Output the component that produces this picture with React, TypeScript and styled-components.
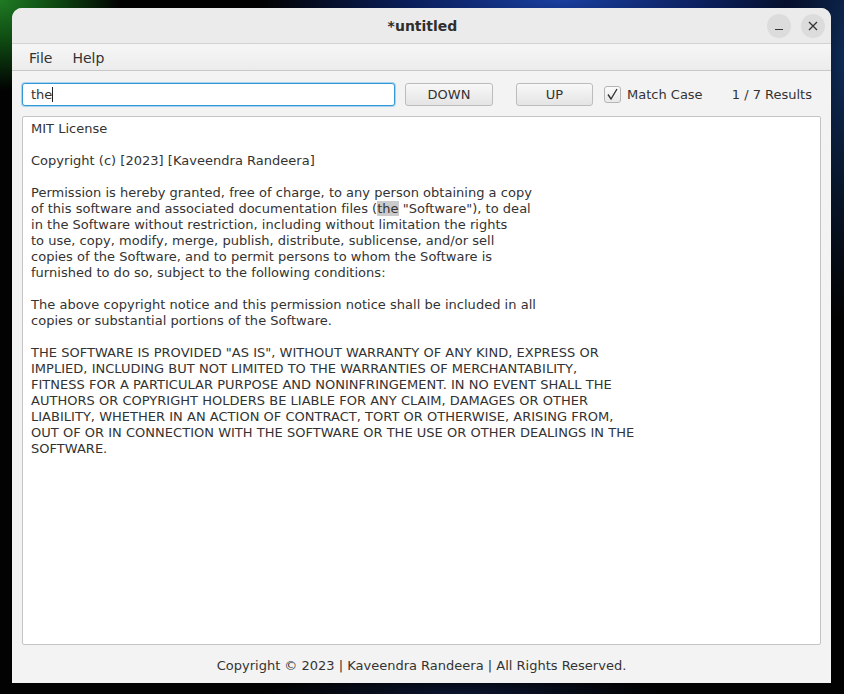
import styled, { createGlobalStyle } from 'styled-components';

const GlobalStyle = createGlobalStyle`
  html, body {
    margin: 0;
    padding: 0;
    width: 844px;
    height: 694px;
    overflow: hidden;
  }
  body {
    background:
      radial-gradient(ellipse 120px 90px at 0px 0px, #1f7a24 0%, #0e4a12 45%, rgba(0,0,0,0) 100%),
      radial-gradient(ellipse 300px 60px at 560px 0px, #1a3fa0 0%, #0a1e5a 50%, rgba(0,0,0,0) 100%),
      radial-gradient(ellipse 60px 260px at 844px 60px, #0e2a55 0%, rgba(0,0,0,0) 100%),
      radial-gradient(ellipse 200px 20px at 460px 694px, #0b1530 0%, rgba(0,0,0,0) 100%),
      #020202;
    font-family: 'DejaVu Sans', 'Liberation Sans', sans-serif;
  }
`;

const Desktop = styled.div`
  padding: 8px 0 0 12px;
`;

const Window = styled.div`
  width: 819px;
  height: 675px;
  display: flex;
  flex-direction: column;
  background: #f3f3f3;
  border-radius: 10px 10px 0 0;
  overflow: hidden;
`;

const TitleBar = styled.div`
  height: 36px;
  flex: none;
  display: flex;
  align-items: center;
  justify-content: center;
  position: relative;
  background: #ebebeb;
  border-bottom: 1px solid #d2d2d2;
  box-sizing: border-box;
`;

const Title = styled.div`
  font-size: 14px;
  font-weight: bold;
  color: #2e2e2e;
  margin-left: 2px;
`;

const WinControls = styled.div`
  position: absolute;
  right: 6px;
  top: 6px;
  display: flex;
  gap: 10px;
`;

const WinButton = styled.div`
  width: 24px;
  height: 24px;
  border-radius: 50%;
  background: #dcdcdc;
  display: flex;
  align-items: center;
  justify-content: center;
`;

const MenuBar = styled.div`
  height: 27px;
  flex: none;
  display: flex;
  align-items: center;
  padding: 2px 0 0 17px;
  gap: 20px;
  background: linear-gradient(#f6f6f6, #ececec);
  border-bottom: 1px solid #c8c8c8;
  box-sizing: border-box;
  font-size: 14px;
  color: #333;
`;

const Toolbar = styled.div`
  height: 45px;
  flex: none;
  display: flex;
  align-items: center;
  padding: 2px 10px 0 10px;
  box-sizing: border-box;
  font-size: 13px;
  color: #333;
`;

const SearchField = styled.div`
  width: 373px;
  height: 23px;
  box-sizing: border-box;
  border: 1px solid #3399d6;
  border-radius: 3px;
  box-shadow: 0 0 0 1px #a8d4ef;
  background: #fff;
  display: flex;
  align-items: center;
  padding-left: 8px;
  font-size: 13px;
`;

const Caret = styled.span`
  display: inline-block;
  width: 1px;
  height: 15px;
  background: #222;
`;

const Button = styled.div<{ $width: number; $gap: number }>`
  width: ${(p) => p.$width}px;
  height: 23px;
  margin-left: ${(p) => p.$gap}px;
  box-sizing: border-box;
  border: 1px solid #bcbcbc;
  border-radius: 3px;
  background: linear-gradient(#f8f8f8, #e4e4e4);
  display: flex;
  align-items: center;
  justify-content: center;
  font-size: 13px;
  color: #333;
`;

const Check = styled.div`
  width: 17px;
  height: 17px;
  margin-left: 11px;
  box-sizing: border-box;
  border: 1px solid #b5b5b5;
  border-radius: 3px;
  background: linear-gradient(#fbfbfb, #e8e8e8);
  display: flex;
  align-items: center;
  justify-content: center;
`;

const CheckLabel = styled.span`
  margin-left: 6px;
`;

const Results = styled.span`
  margin-left: auto;
  margin-right: 9px;
`;

const Editor = styled.div`
  flex: 1;
  margin: 0 10px;
  background: #fff;
  border: 1px solid #c4c4c4;
  border-radius: 2px;
  padding: 4px 8px;
  font-size: 13px;
  letter-spacing: 0.02px;
  line-height: 16px;
  color: #333;
  white-space: pre;
  overflow: hidden;
`;

const Mark = styled.span`
  background: #cbcbcb;
`;

const Footer = styled.div`
  height: 38px;
  flex: none;
  display: flex;
  align-items: center;
  justify-content: center;
  font-size: 13px;
  color: #333;
  padding-top: 2px;
  box-sizing: border-box;
`;

const before = `MIT License

Copyright (c) [2023] [Kaveendra Randeera]

Permission is hereby granted, free of charge, to any person obtaining a copy
of this software and associated documentation files (`;

const after = ` "Software"), to deal
in the Software without restriction, including without limitation the rights
to use, copy, modify, merge, publish, distribute, sublicense, and/or sell
copies of the Software, and to permit persons to whom the Software is
furnished to do so, subject to the following conditions:

The above copyright notice and this permission notice shall be included in all
copies or substantial portions of the Software.

THE SOFTWARE IS PROVIDED "AS IS", WITHOUT WARRANTY OF ANY KIND, EXPRESS OR
IMPLIED, INCLUDING BUT NOT LIMITED TO THE WARRANTIES OF MERCHANTABILITY,
FITNESS FOR A PARTICULAR PURPOSE AND NONINFRINGEMENT. IN NO EVENT SHALL THE
AUTHORS OR COPYRIGHT HOLDERS BE LIABLE FOR ANY CLAIM, DAMAGES OR OTHER
LIABILITY, WHETHER IN AN ACTION OF CONTRACT, TORT OR OTHERWISE, ARISING FROM,
OUT OF OR IN CONNECTION WITH THE SOFTWARE OR THE USE OR OTHER DEALINGS IN THE
SOFTWARE.`;

export default function App() {
  return (
    <>
      <GlobalStyle />
      <Desktop>
        <Window>
          <TitleBar>
            <Title>*untitled</Title>
            <WinControls>
              <WinButton>
                <svg width='10' height='10' viewBox='0 0 10 10'>
                  <line x1='1' y1='8.5' x2='9' y2='8.5' stroke='#333' strokeWidth='1.2' />
                </svg>
              </WinButton>
              <WinButton>
                <svg width='10' height='10' viewBox='0 0 10 10'>
                  <path d='M1 1 L9 9 M9 1 L1 9' stroke='#333' strokeWidth='1.3' />
                </svg>
              </WinButton>
            </WinControls>
          </TitleBar>
          <MenuBar>
            <span>File</span>
            <span>Help</span>
          </MenuBar>
          <Toolbar>
            <SearchField>
              the
              <Caret />
            </SearchField>
            <Button $width={88} $gap={10}>DOWN</Button>
            <Button $width={77} $gap={23}>UP</Button>
            <Check>
              <svg width='13' height='13' viewBox='0 0 13 13'>
                <path d='M2 6.5 L5 11 L11 1' fill='none' stroke='#333' strokeWidth='1.4' />
              </svg>
            </Check>
            <CheckLabel>Match Case</CheckLabel>
            <Results>1 / 7 Results</Results>
          </Toolbar>
          <Editor>
            {before}
            <Mark>the</Mark>
            {after}
          </Editor>
          <Footer>Copyright © 2023 | Kaveendra Randeera | All Rights Reserved.</Footer>
        </Window>
      </Desktop>
    </>
  );
}
